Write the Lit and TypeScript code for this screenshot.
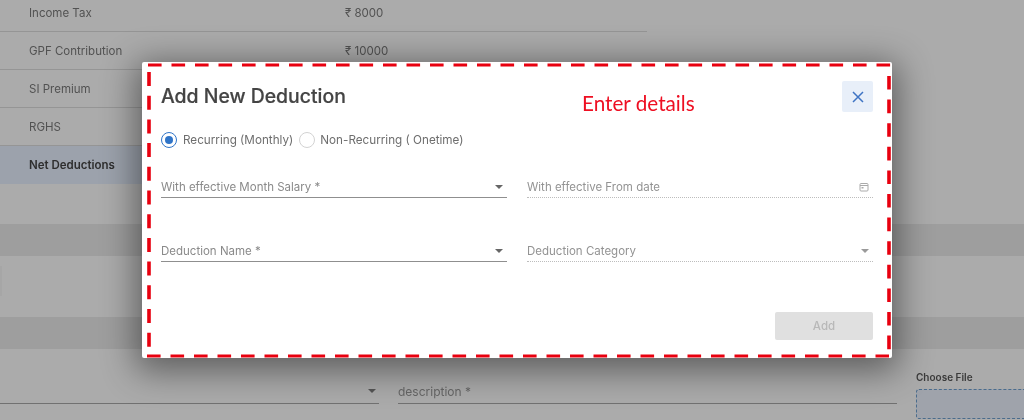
import { LitElement, html, css, svg } from "lit";
import { customElement } from "lit/decorators.js";

const rows: [string, string][] = [
  ["Income Tax", "₹ 8000"],
  ["GPF Contribution", "₹ 10000"],
  ["SI Premium", ""],
  ["RGHS", ""],
];

@customElement("app-root")
export class AppRoot extends LitElement {
  static styles = css`
    :host { display: block; width: 1024px; height: 420px; }
    * { box-sizing: border-box; }
    .page { position: relative; width: 1024px; height: 420px; overflow: hidden; background: #ababab; font-family: Inter, "Liberation Sans", sans-serif; color: #555; }
    .content { display: flex; flex-direction: column; filter: blur(0.4px); }
    .table { width: 647px; margin-top: -6px; display: flex; flex-direction: column; }
    .row { height: 38px; padding-left: 29px; display: grid; grid-template-columns: 316px 1fr; align-items: center; font-size: 11.5px; color: #525252; border-bottom: 1px solid #959595; }
    .row.net { background: #9ca2ac; color: #2e2e2e; font-weight: 600; border-bottom: 0; }
    .band { height: 32px; background: #9e9e9e; }
    .band.one { margin-top: 40px; }
    .sliver { width: 2px; height: 30px; margin-top: 10px; background: #a6a6a6; }
    .band.two { margin-top: 21px; }
    .form { display: grid; grid-template-columns: 379px 499px 108px; column-gap: 19px; padding-top: 29px; }
    .line { height: 26px; border-bottom: 1px solid #717171; display: flex; align-items: center; justify-content: space-between; font-size: 12px; color: #666; padding: 1px 3px 0 0; }
    .file { margin-top: -7px; }
    .file-label { font-size: 10px; font-weight: 600; color: #3a3a3a; line-height: 12px; }
    .drop { width: 108px; height: 30px; margin-top: 6px; background: #9fa3ab; border: 1px dashed #4a6c8c; border-right: 0; border-radius: 3px 0 0 3px; }
    .scrim-arrow { width: 0; height: 0; border-left: 4px solid transparent; border-right: 4px solid transparent; border-top: 4px solid #555; }

    .modal { position: absolute; left: 142px; top: 62px; width: 750px; height: 296px; background: #fff; border-radius: 2px; box-shadow: 0 7px 34px 6px rgba(0,0,0,.45); padding: 0 19px; display: flex; flex-direction: column; }
    .inner { position: relative; display: flex; flex-direction: column; flex: 1; filter: blur(0.35px); }
    .head { height: 50px; padding-top: 20px; position: relative; }
    h2 { margin: 0; font-size: 19.4px; line-height: 29px; font-weight: 500; color: #444; -webkit-text-stroke: 0.2px #444; }
    .close { position: absolute; right: 0; top: 19px; width: 31px; height: 31px; border-radius: 2px; background: #e8eff9; display: flex; align-items: center; justify-content: center; }
    .note { position: absolute; left: 421px; top: 28px; font-family: Lato, sans-serif; font-size: 20.7px; line-height: 26px; color: #ee0f22; }
    .radios { display: flex; align-items: center; margin-top: 17px; height: 22px; font-size: 11.7px; color: #6e6e6e; }
    .radio { width: 16px; height: 16px; border-radius: 50%; border: 1px solid #d2d2d2; margin-right: 6px; flex: none; }
    .radio.on { border: 1.5px solid #2f74c8; display: flex; align-items: center; justify-content: center; }
    .radio.on::after { content: ""; width: 8.5px; height: 8.5px; border-radius: 50%; background: #2f74c8; }
    .radio.off { margin-left: 6px; margin-right: 5px; }
    .fields { display: grid; grid-template-columns: 346px 346px; column-gap: 20px; row-gap: 38px; margin-top: 21px; }
    .field { height: 26px; display: flex; justify-content: space-between; align-items: center; font-size: 11.5px; color: #8a8a8a; border-bottom: 1px solid #8f8f8f; padding: 4px 4px 0 0; }
    .field.off { border-bottom: 1px dotted #bdbdbd; color: #939393; padding-right: 4px; }
    .arrow { width: 0; height: 0; border-left: 4px solid transparent; border-right: 4px solid transparent; border-top: 4px solid #666; }
    .off .arrow { border-top-color: #9a9a9a; }
    .foot { margin-top: auto; margin-bottom: 18px; display: flex; justify-content: flex-end; }
    .add { width: 98px; height: 28px; border-radius: 2px; background: #e0e0e0; color: #b8b8b8; font-size: 11.5px; font-weight: 500; display: flex; align-items: center; justify-content: center; }
    .dash { position: absolute; left: 0; top: 0; width: 750px; height: 296px; pointer-events: none; }
  `;

  private dashes() {
    const s = "stroke:#e8000f;fill:none";
    return svg`
      <line x1="6" y1="3" x2="749" y2="3" style="${s};stroke-width:3.2;stroke-dasharray:13.6 9.9"></line>
      <line x1="5" y1="294" x2="747" y2="294" style="${s};stroke-width:3.2;stroke-dasharray:13.6 9.9"></line>
      <line x1="7" y1="10" x2="7" y2="290" style="${s};stroke-width:3.6;stroke-dasharray:14 9.7"></line>
      <line x1="747" y1="14" x2="747" y2="292" style="${s};stroke-width:3.6;stroke-dasharray:13.6 10"></line>
    `;
  }

  render() {
    return html`
      <div class="page">
        <div class="content">
          <div class="table">
            ${rows.map(([a, b]) => html`<div class="row"><span>${a}</span><span>${b}</span></div>`)}
            <div class="row net"><span>Net Deductions</span></div>
          </div>
          <div class="band one"></div>
          <div class="sliver"></div>
          <div class="band two"></div>
          <div class="form">
            <div class="line"><span></span><span class="scrim-arrow"></span></div>
            <div class="line"><span>description *</span></div>
            <div class="file">
              <div class="file-label">Choose File</div>
              <div class="drop"></div>
            </div>
          </div>
        </div>
        <div class="modal">
          <div class="inner">
            <div class="head">
              <h2>Add New Deduction</h2>
              <div class="close">
                <svg width="14" height="14" viewBox="0 0 14 14"><path d="M2 2l10 10M12 2L2 12" stroke="#3f74c4" stroke-width="1.5" fill="none"></path></svg>
              </div>
            </div>
            <div class="note">Enter details</div>
            <div class="radios">
              <span class="radio on"></span><span>Recurring (Monthly)</span>
              <span class="radio off"></span><span>Non-Recurring ( Onetime)</span>
            </div>
            <div class="fields">
              <div class="field"><span>With effective Month Salary *</span><span class="arrow"></span></div>
              <div class="field off"><span>With effective From date</span>
                <svg width="10" height="10" viewBox="0 0 10 10"><rect x="1" y="1.5" width="8" height="7.5" rx="1" fill="none" stroke="#aaa"></rect><path d="M1 3.5h8" stroke="#aaa"></path><rect x="2.5" y="5" width="2" height="1.5" fill="#aaa"></rect></svg>
              </div>
              <div class="field"><span>Deduction Name *</span><span class="arrow"></span></div>
              <div class="field off"><span>Deduction Category</span><span class="arrow"></span></div>
            </div>
            <div class="foot"><div class="add">Add</div></div>
          </div>
          <svg class="dash" viewBox="0 0 750 296">${this.dashes()}</svg>
        </div>
      </div>
    `;
  }
}
